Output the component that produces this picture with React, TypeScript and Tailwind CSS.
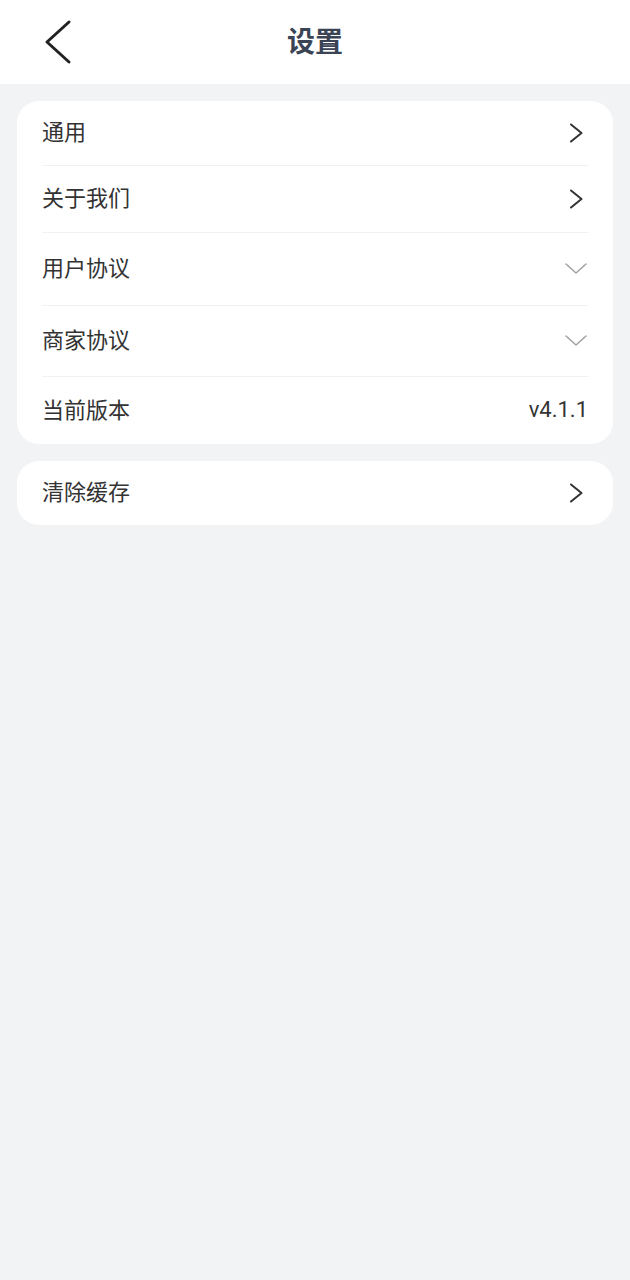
import React from "react";

const cjk = { fontFamily: '"Noto Sans CJK SC", "Noto Sans", sans-serif' };

function ChevronRight() {
  return (
    <svg width="24" height="24" viewBox="0 0 24 24" fill="none">
      <polyline points="7,3.5 17.5,12 7,20.5" stroke="#333333" strokeWidth="2" strokeLinecap="round" strokeLinejoin="round" />
    </svg>
  );
}

function ChevronDown() {
  return (
    <svg width="24" height="24" viewBox="0 0 24 24" fill="none">
      <polyline points="2,7 12,16 22,7" stroke="#a3a3a3" strokeWidth="1.6" strokeLinecap="round" strokeLinejoin="round" />
    </svg>
  );
}

function Row({ label, h, right, last }: { label: string; h: string; right: React.ReactNode; last?: boolean }) {
  return (
    <div className={`flex items-center justify-between ${h} ${last ? "" : "border-b border-[#f1f1f1]"}`}>
      <span className="pb-[6px] text-[22px] text-[#333333] leading-none" style={cjk}>{label}</span>
      {right}
    </div>
  );
}

export default function App() {
  return (
    <div className="min-h-[1280px] w-[630px] bg-[#f2f3f5]" style={cjk}>
      <div className="relative flex h-[84px] items-center justify-center bg-white">
        <button className="absolute left-[44px] top-[19px] h-[46px] w-[30px]">
          <svg width="30" height="46" viewBox="0 0 30 46" fill="none">
            <polyline points="25,3 3,23 25,43" stroke="#222222" strokeWidth="3" strokeLinecap="round" strokeLinejoin="round" />
          </svg>
        </button>
        <h1 className="pb-[4px] text-[28px] font-bold text-[#3b4455] leading-none" style={cjk}>设置</h1>
      </div>

      <div className="mx-[17px] mt-[17px] rounded-[22px] bg-white px-[25px]">
        <Row label="通用" h="h-[65px]" right={<ChevronRight />} />
        <Row label="关于我们" h="h-[67px]" right={<ChevronRight />} />
        <Row label="用户协议" h="h-[73px]" right={<ChevronDown />} />
        <Row label="商家协议" h="h-[71px]" right={<ChevronDown />} />
        <Row
          label="当前版本"
          h="h-[67px]"
          last
          right={
            <span className="pb-[2px] text-[22px] text-[#333333] leading-none" style={{ fontFamily: 'Roboto, "Noto Sans", sans-serif' }}>
              v4.1.1
            </span>
          }
        />
      </div>

      <div className="mx-[17px] mt-[17px] rounded-[22px] bg-white px-[25px]">
        <Row label="清除缓存" h="h-[64px]" last right={<ChevronRight />} />
      </div>
    </div>
  );
}
